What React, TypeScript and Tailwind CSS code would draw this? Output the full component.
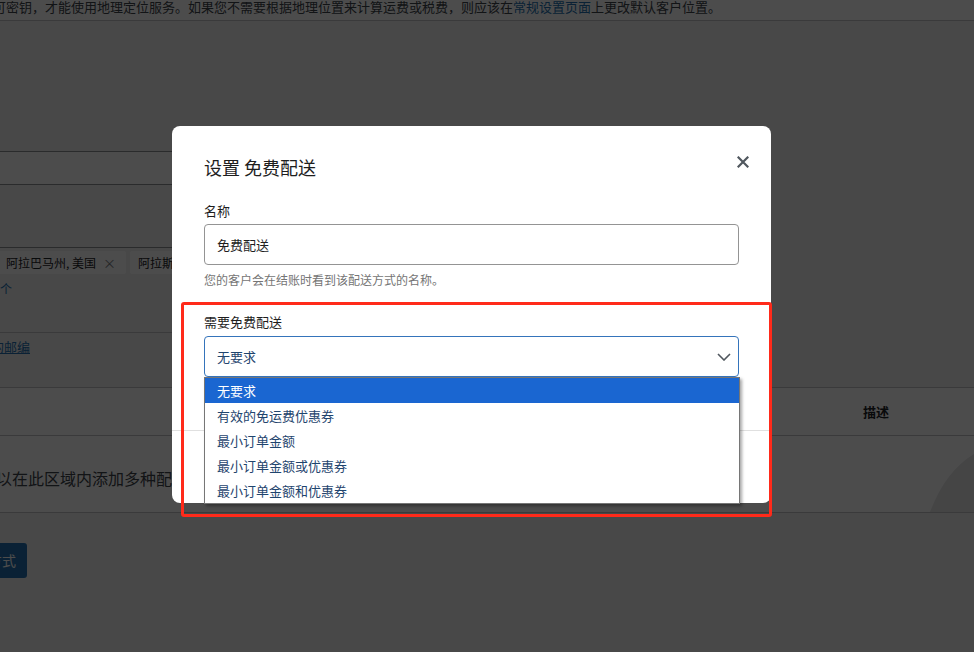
import React from "react";

const options = ["无要求", "有效的免运费优惠券", "最小订单金额", "最小订单金额或优惠券", "最小订单金额和优惠券"];

function Chip({ label }: { label: string }) {
    return (
        <div className="flex h-[23px] shrink-0 items-center gap-[7px] rounded-[2px] bg-white pl-[8px] pr-[10px] text-[12px] text-[#1d2327]">
            <span className="whitespace-nowrap">{label}</span>
            <span className="text-[13px] leading-none text-[#787c82]">×</span>
        </div>
    );
}

function SettingsPage() {
    return (
        <div className="flex h-full w-full flex-col bg-[#f0f0f1] text-[#1d2327]">
            <div className="h-[21px] shrink-0 overflow-hidden border-b border-[#c3c4c7] bg-white">
                <p className="-ml-[7px] -mt-[1px] whitespace-nowrap text-[13px] leading-[16px] text-[#3c434a]">
                    可密钥，才能使用地理定位服务。如果您不需要根据地理位置来计算运费或税费，则应该在
                    <a className="text-[#2271b1]">常规设置页面</a>
                    上更改默认客户位置。
                </p>
            </div>

            <div className="mt-[130px] h-[34px] w-[420px] shrink-0 border-y border-[#8c8f94] bg-white" />

            <div className="mt-[62px] w-[420px] shrink-0 border-t border-[#8c8f94] pt-[3px]">
                <div className="-ml-[2px] flex gap-[4px]">
                    <Chip label="阿拉巴马州, 美国" />
                    <Chip label="阿拉斯加州, 美国" />
                    <Chip label="亚利桑那州, 美国" />
                </div>
            </div>

            <div className="mt-[7px] flex w-[12px] shrink-0 justify-end">
                <a className="whitespace-nowrap text-[12px] leading-[16px] text-[#2271b1]">+ 更多 48 个</a>
            </div>

            <div className="mt-[35px] w-[420px] shrink-0 border-t border-[#c3c4c7] pt-[5px]">
                <div className="flex w-[30px] justify-end">
                    <a className="whitespace-nowrap text-[13px] leading-[18px] text-[#2271b1] underline">限制为特定的邮编</a>
                </div>
            </div>

            <div className="mt-[31px] shrink-0 border-y border-[#c3c4c7] bg-white">
                <div className="flex h-[48px] items-center border-b border-[#c3c4c7] pl-[863px] text-[13px] font-bold">
                    描述
                </div>
                <div className="relative h-[76px] overflow-hidden pt-[30px]">
                    <p className="-ml-[36px] whitespace-nowrap text-[16px] leading-[24px] text-[#3c434a]">
                        您可以在此区域内添加多种配送方式，只有此区域内的客户才能看到它们。
                    </p>
                    <svg className="absolute bottom-0 right-0" width="46" height="60" viewBox="0 0 46 60">
                        <path d="M2 60 C 12 34 26 14 46 2 L46 60 Z" fill="#e6e6e8" />
                    </svg>
                </div>
            </div>

            <div className="mt-[30px] flex w-[27px] shrink-0 justify-end">
                <button className="h-[35px] shrink-0 whitespace-nowrap rounded-[3px] bg-[#2271b1] px-[11px] text-[14px] text-white">
                    添加配送方式
                </button>
            </div>
        </div>
    );
}

function FreeShippingModal() {
    return (
        <div className="absolute left-[172px] top-[126px] flex h-[377px] w-[599px] flex-col rounded-[8px] bg-white">
            <div className="px-[32px] pt-[29px]">
                <div className="flex items-start justify-between">
                    <h1 className="text-[18px] font-normal leading-[24px] text-[#1e1e1e]">设置 免费配送</h1>
                    <svg className="-mr-[10px] mt-[1px]" width="12" height="12" viewBox="0 0 12 12">
                        <path d="M1.5 1.5 L10.5 10.5 M10.5 1.5 L1.5 10.5" stroke="#50575e" strokeWidth="2.2" strokeLinecap="square" />
                    </svg>
                </div>

                <label className="mt-[23px] block text-[13px] leading-[18px] text-[#1e1e1e]">名称</label>
                <div className="mt-[4px] flex h-[41px] items-center rounded-[4px] border border-[#949494] pl-[12px] text-[13px] text-[#1e1e1e]">
                    免费配送
                </div>
                <p className="mt-[7px] text-[12px] leading-[16px] text-[#757575]">您的客户会在结账时看到该配送方式的名称。</p>

                <label className="mt-[25px] block text-[13px] leading-[18px] text-[#1e1e1e]">需要免费配送</label>
                <div className="mt-[5px] flex h-[41px] items-center justify-between rounded-[4px] border-[1.5px] border-[#3574bb] pl-[12px] pr-[7px] text-[13px] text-[#1f456e]">
                    <span>无要求</span>
                    <svg width="14" height="8" viewBox="0 0 14 8">
                        <path d="M1 1 L7 7 L13 1" fill="none" stroke="#50575e" strokeWidth="1.6" />
                    </svg>
                </div>
            </div>
            <div className="mt-[53px] flex-1 border-t border-[#e0e0e0]" />
        </div>
    );
}

export default function App() {
    return (
        <div className="relative h-[652px] w-[974px] overflow-hidden font-['Noto_Sans_CJK_SC',sans-serif]">
            <SettingsPage />
            <div className="absolute inset-0 bg-black/70" />
            <FreeShippingModal />

            <ul className="absolute left-[204px] top-[377px] w-[536px] border border-[#767676] bg-white text-[13px] shadow-[2px_2px_3px_rgba(0,0,0,0.35)]">
                {options.map((o, i) => (
                    <li
                        key={o}
                        className={i === 0 ? "h-[25px] bg-[#1a66d1] pl-[12px] leading-[25px] text-white" : "h-[25px] pl-[12px] leading-[25px] text-[#1f456e]"}
                    >
                        {o}
                    </li>
                ))}
            </ul>

            <div className="pointer-events-none absolute left-[181px] top-[302px] h-[215px] w-[591px] rounded-[3px] border-[3px] border-[#ff2a1a]" />
        </div>
    );
}
